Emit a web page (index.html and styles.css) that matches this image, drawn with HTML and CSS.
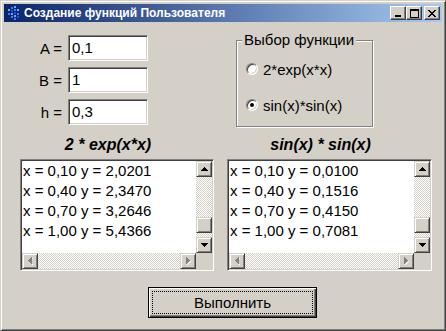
FILE: index.html
```html
<!DOCTYPE html>
<html lang="ru">
<head>
  <meta charset="UTF-8" />
  <title>Создание функций Пользователя</title>
  <link rel="stylesheet" href="styles.css">
</head>
<body>
  <div class="window">
    <div class="titlebar">
      <svg class="app-icon" width="16" height="16" viewBox="0 0 16 16" shape-rendering="crispEdges">
        <rect x="2" y="4" width="2" height="2" fill="#6fa8ff"/>
        <rect x="5" y="2" width="2" height="2" fill="#3a7bff"/>
        <rect x="8" y="1" width="2" height="2" fill="#6fa8ff"/>
        <rect x="5" y="5" width="2" height="2" fill="#1a4fe0"/>
        <rect x="8" y="4" width="2" height="2" fill="#3a7bff"/>
        <rect x="11" y="4" width="2" height="2" fill="#6fa8ff"/>
        <rect x="2" y="8" width="2" height="2" fill="#3a7bff"/>
        <rect x="5" y="8" width="2" height="2" fill="#6fa8ff"/>
        <rect x="8" y="7" width="2" height="2" fill="#1a4fe0"/>
        <rect x="11" y="8" width="2" height="2" fill="#3a7bff"/>
        <rect x="5" y="11" width="2" height="2" fill="#3a7bff"/>
        <rect x="8" y="10" width="2" height="2" fill="#6fa8ff"/>
        <rect x="11" y="11" width="2" height="2" fill="#1a4fe0"/>
        <rect x="8" y="13" width="2" height="2" fill="#3a7bff"/>
      </svg>
      <span class="title">Создание функций Пользователя</span>
      <div class="caption-buttons">
        <span class="cap-btn">
          <svg width="8" height="7" viewBox="0 0 8 7" shape-rendering="crispEdges"><rect x="1" y="5" width="6" height="2" fill="#000"/></svg>
        </span>
        <span class="cap-btn">
          <svg width="9" height="9" viewBox="0 0 9 9" shape-rendering="crispEdges"><path d="M0 0h9v9h-9z M1 2v6h7v-6z" fill="#000" fill-rule="evenodd"/></svg>
        </span>
        <span class="cap-btn close">
          <svg width="8" height="7" viewBox="0 0 8 7" shape-rendering="crispEdges">
            <path d="M0 0h2v1h-2z M6 0h2v1h-2z M1 1h2v1h-2z M5 1h2v1h-2z M2 2h4v1h-4z M3 3h2v1h-2z M2 4h4v1h-4z M1 5h2v1h-2z M5 5h2v1h-2z M0 6h2v1h-2z M6 6h2v1h-2z" fill="#000"/>
          </svg>
        </span>
      </div>
    </div>

    <div class="client">
      <div class="top">
        <div class="params">
          <label class="param-label">A =</label>
          <div class="edit">0,1</div>
          <label class="param-label">B =</label>
          <div class="edit">1</div>
          <label class="param-label">h =</label>
          <div class="edit">0,3</div>
        </div>

        <fieldset class="group">
          <legend>Выбор функции</legend>
          <div class="radio-row first"><span class="radio"></span>2*exp(x*x)</div>
          <div class="radio-row"><span class="radio checked"></span>sin(x)*sin(x)</div>
        </fieldset>
      </div>

      <div class="lists">
        <div class="list-col narrow">
          <div class="list-title">2 * exp(x*x)</div>
          <div class="listbox">
            <div class="items">
              <div>x = 0,10 y = 2,0201</div>
              <div>x = 0,40 y = 2,3470</div>
              <div>x = 0,70 y = 3,2646</div>
              <div>x = 1,00 y = 5,4366</div>
            </div>
            <div class="vscroll">
              <span class="sb-btn"><svg width="7" height="4" viewBox="0 0 7 4" shape-rendering="crispEdges"><path d="M3 0h1v1h-1z M2 1h3v1h-3z M1 2h5v1h-5z M0 3h7v1h-7z" fill="#000"/></svg></span>
              <span class="sb-btn thumb"></span>
              <span class="sb-btn down"><svg width="7" height="4" viewBox="0 0 7 4" shape-rendering="crispEdges"><path d="M0 0h7v1h-7z M1 1h5v1h-5z M2 2h3v1h-3z M3 3h1v1h-1z" fill="#000"/></svg></span>
            </div>
            <div class="hscroll">
              <span class="sb-btn"><svg width="5" height="8" viewBox="0 0 5 8" shape-rendering="crispEdges"><path d="M4 1h1v1h-1z M3 2h1v1h-1z M2 3h1v1h-1z M1 4h1v1h-1z M2 5h1v1h-1z M3 6h1v1h-1z M4 7h1v1h-1z" fill="#fff"/><path d="M3 0h1v7h-1z M2 1h1v5h-1z M1 2h1v3h-1z M0 3h1v1h-1z" fill="#808080"/></svg></span>
              <span class="sb-btn right"><svg width="5" height="8" viewBox="0 0 5 8" shape-rendering="crispEdges"><path d="M1 7h1v1h-1z M2 6h1v1h-1z M3 5h1v1h-1z M4 4h1v1h-1z" fill="#fff"/><path d="M0 0h1v7h-1z M1 1h1v5h-1z M2 2h1v3h-1z M3 3h1v1h-1z" fill="#808080"/></svg></span>
            </div>
            <div class="corner"></div>
          </div>
        </div>

        <div class="list-col wide">
          <div class="list-title">sin(x) * sin(x)</div>
          <div class="listbox">
            <div class="items">
              <div>x = 0,10 y = 0,0100</div>
              <div>x = 0,40 y = 0,1516</div>
              <div>x = 0,70 y = 0,4150</div>
              <div>x = 1,00 y = 0,7081</div>
            </div>
            <div class="vscroll">
              <span class="sb-btn"><svg width="7" height="4" viewBox="0 0 7 4" shape-rendering="crispEdges"><path d="M3 0h1v1h-1z M2 1h3v1h-3z M1 2h5v1h-5z M0 3h7v1h-7z" fill="#000"/></svg></span>
              <span class="sb-btn thumb"></span>
              <span class="sb-btn down"><svg width="7" height="4" viewBox="0 0 7 4" shape-rendering="crispEdges"><path d="M0 0h7v1h-7z M1 1h5v1h-5z M2 2h3v1h-3z M3 3h1v1h-1z" fill="#000"/></svg></span>
            </div>
            <div class="hscroll">
              <span class="sb-btn"><svg width="5" height="8" viewBox="0 0 5 8" shape-rendering="crispEdges"><path d="M4 1h1v1h-1z M3 2h1v1h-1z M2 3h1v1h-1z M1 4h1v1h-1z M2 5h1v1h-1z M3 6h1v1h-1z M4 7h1v1h-1z" fill="#fff"/><path d="M3 0h1v7h-1z M2 1h1v5h-1z M1 2h1v3h-1z M0 3h1v1h-1z" fill="#808080"/></svg></span>
              <span class="sb-btn right"><svg width="5" height="8" viewBox="0 0 5 8" shape-rendering="crispEdges"><path d="M1 7h1v1h-1z M2 6h1v1h-1z M3 5h1v1h-1z M4 4h1v1h-1z" fill="#fff"/><path d="M0 0h1v7h-1z M1 1h1v5h-1z M2 2h1v3h-1z M3 3h1v1h-1z" fill="#808080"/></svg></span>
            </div>
            <div class="corner"></div>
          </div>
        </div>
      </div>

      <div class="actions">
        <button class="default-btn"><span class="focus">Выполнить</span></button>
      </div>
    </div>
  </div>
</body>
</html>
```

FILE: styles.css
```css
body {
  margin: 0;
  background: #d4d0c8;
  font-family: "Liberation Sans", Arial, sans-serif;
  font-size: 15px;
  color: #000;
}
.window {
  width: 446px;
  height: 331px;
  box-sizing: border-box;
  background: #d4d0c8;
  border: 1px solid;
  border-color: #d4d0c8 #404040 #404040 #d4d0c8;
  box-shadow: inset 1px 1px #fff, inset -1px -1px #808080;
  padding: 3px;
}
.titlebar {
  height: 18px;
  display: flex;
  align-items: center;
  padding-left: 2px;
  margin-bottom: 1px;
  background: linear-gradient(to right, #0a246a, #a6caf0);
}
.app-icon {
  display: block;
}
.title {
  margin-left: 2px;
  color: #fff;
  font-weight: bold;
  font-size: 12px;
  white-space: nowrap;
}
.caption-buttons {
  margin-left: auto;
  padding-right: 2px;
  display: flex;
}
.cap-btn {
  width: 16px;
  height: 14px;
  box-sizing: border-box;
  background: #d4d0c8;
  border: 1px solid;
  border-color: #fff #404040 #404040 #fff;
  box-shadow: inset -1px -1px #808080;
  display: flex;
  align-items: center;
  justify-content: center;
}
.cap-btn svg {
  display: block;
}
.cap-btn.close {
  margin-left: 2px;
}

/* parameters + function choice */
.top {
  display: flex;
  padding-top: 12px;
}
.params {
  margin-left: 28px;
  display: grid;
  grid-template-columns: 30px 80px;
  grid-auto-rows: 26px;
  column-gap: 6px;
  row-gap: 6px;
  align-items: center;
}
.param-label {
  text-align: right;
}
.edit {
  height: 26px;
  box-sizing: border-box;
  background: #fff;
  border: 1px solid;
  border-color: #808080 #fff #fff #808080;
  box-shadow: inset 1px 1px #404040, inset -1px -1px #d4d0c8;
  padding: 0 3px;
  line-height: 24px;
}
.group {
  margin: -3px 0 0 88px;
  width: 137px;
  height: 95px;
  box-sizing: border-box;
  border: 1px solid #808080;
  box-shadow: inset 1px 1px #fff, 1px 1px #fff;
  padding: 0 0 0 9px;
  min-inline-size: 0;
}
.group legend {
  padding: 0 2px;
  margin-left: -4px;
  line-height: 16px;
  background: #d4d0c8;
}
.radio-row {
  display: flex;
  align-items: center;
  gap: 5px;
  height: 18px;
  margin-top: 18px;
  white-space: nowrap;
}
.radio-row.first {
  margin-top: 12px;
}
.radio {
  width: 12px;
  height: 12px;
  box-sizing: border-box;
  border-radius: 50%;
  background: #fff;
  border: 1px solid;
  border-color: #808080 #fff #fff #808080;
  box-shadow: inset 1px 1px #404040, inset -1px -1px #d4d0c8;
  position: relative;
}
.radio.checked::after {
  content: "";
  position: absolute;
  left: 3px;
  top: 3px;
  width: 4px;
  height: 4px;
  border-radius: 50%;
  background: #000;
}

/* result lists */
.lists {
  display: flex;
  gap: 13px;
  padding-left: 16px;
  margin-top: 9px;
}
.list-col.narrow {
  width: 194px;
}
.list-col.wide {
  width: 205px;
}
.list-title {
  padding-right: 18px;
  text-align: center;
  font-style: italic;
  font-weight: bold;
  font-size: 16px;
  line-height: 18px;
  margin-bottom: 5px;
}
.listbox {
  height: 112px;
  box-sizing: border-box;
  background: #fff;
  border: 1px solid;
  border-color: #808080 #fff #fff #808080;
  box-shadow: inset 1px 1px #404040, inset -1px -1px #d4d0c8;
  padding: 1px;
  display: grid;
  grid-template-columns: 1fr 16px;
  grid-template-rows: 1fr 16px;
}
.items {
  padding-left: 1px;
  line-height: 20px;
  white-space: nowrap;
  overflow: hidden;
}
.vscroll, .hscroll {
  display: flex;
  background-color: #fff;
  background-image: conic-gradient(#d4d0c8 25%, #fff 0 50%, #d4d0c8 0 75%, #fff 0);
  background-size: 2px 2px;
}
.vscroll {
  flex-direction: column;
}
.sb-btn {
  width: 16px;
  height: 16px;
  flex: none;
  box-sizing: border-box;
  background: #d4d0c8;
  border: 1px solid;
  border-color: #d4d0c8 #404040 #404040 #d4d0c8;
  box-shadow: inset 1px 1px #fff, inset -1px -1px #808080;
  display: flex;
  align-items: center;
  justify-content: center;
}
.sb-btn svg {
  display: block;
}
.sb-btn.thumb {
  margin-top: 40px;
}
.sb-btn.down {
  margin-top: auto;
}
.sb-btn.right {
  margin-left: auto;
}
.corner {
  background: #d4d0c8;
}

/* run button */
.actions {
  padding-left: 144px;
  margin-top: 16px;
}
.default-btn {
  display: block;
  width: 169px;
  height: 31px;
  box-sizing: border-box;
  padding: 3px;
  margin: 0;
  background: #d4d0c8;
  border: 1px solid #000;
  box-shadow: inset 1px 1px #fff, inset -1px -1px #404040, inset -2px -2px #808080;
  font-family: inherit;
  font-size: 15px;
  color: #000;
}
.default-btn .focus {
  display: flex;
  align-items: center;
  justify-content: center;
  height: 100%;
  box-sizing: border-box;
  border: 1px dotted #000;
}
```
